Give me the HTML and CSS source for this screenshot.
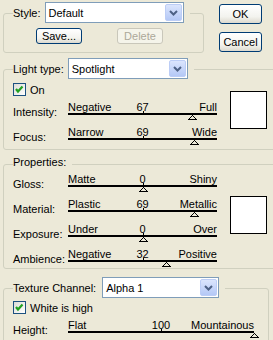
FILE: index.html
```html
<!DOCTYPE html>
<html lang="en">

<head>
    <title>Lighting Effects</title>
    <link rel="stylesheet" href="styles.css">
</head>

<body>
<div class="dialog">
    <div class="top-row">
        <fieldset class="group style-group">
            <legend>
                <div class="legend-row">
                    <span>Style:</span>
                    <div class="combo style-combo">
                        <span class="combo-text">Default</span>
                        <span class="combo-btn"><svg width="9" height="6" viewBox="0 0 9 6"><polyline points="1,1 4.5,4.5 8,1" fill="none" stroke="#4d6185" stroke-width="2"/></svg></span>
                    </div>
                </div>
            </legend>
            <div class="style-buttons">
                <button class="btn small">Save...</button>
                <button class="btn small" disabled>Delete</button>
            </div>
        </fieldset>
        <div class="dialog-buttons">
            <button class="btn">OK</button>
            <button class="btn">Cancel</button>
        </div>
    </div>

    <fieldset class="group wide-group light-group">
        <legend>
            <div class="legend-row">
                <span>Light type:</span>
                <div class="combo light-combo">
                    <span class="combo-text">Spotlight</span>
                    <span class="combo-btn"><svg width="9" height="6" viewBox="0 0 9 6"><polyline points="1,1 4.5,4.5 8,1" fill="none" stroke="#4d6185" stroke-width="2"/></svg></span>
                </div>
            </div>
        </legend>
        <div class="group-body">
            <div class="controls">
                <label class="check-row">
                    <span class="checkbox"><svg width="11" height="11" viewBox="0 0 11 11"><polyline points="2,5 4,7.5 8.5,2.5" fill="none" stroke="#21a121" stroke-width="2.2"/></svg></span>
                    On
                </label>
                <div class="slider-row">
                    <span class="slider-label">Intensity:</span>
                    <div class="slider">
                        <div class="slider-text"><span>Negative</span><span>67</span><span class="max">Full</span></div>
                        <div class="track"></div>
                        <svg class="thumb" style="left: 83.5%" width="9" height="5" viewBox="0 0 9 5"><polygon points="4.5,0.5 8.5,4.5 0.5,4.5" fill="none" stroke="#000"/></svg>
                    </div>
                </div>
                <div class="slider-row">
                    <span class="slider-label">Focus:</span>
                    <div class="slider">
                        <div class="slider-text"><span>Narrow</span><span>69</span><span class="max">Wide</span></div>
                        <div class="track"></div>
                        <svg class="thumb" style="left: 84.5%" width="9" height="5" viewBox="0 0 9 5"><polygon points="4.5,0.5 8.5,4.5 0.5,4.5" fill="none" stroke="#000"/></svg>
                    </div>
                </div>
            </div>
            <div class="swatch light-swatch"></div>
        </div>
    </fieldset>

    <fieldset class="group wide-group props-group">
        <legend><span class="legend-text">Properties:</span></legend>
        <div class="group-body">
            <div class="controls">
                <div class="slider-row">
                    <span class="slider-label">Gloss:</span>
                    <div class="slider">
                        <div class="slider-text"><span>Matte</span><span>0</span><span class="max">Shiny</span></div>
                        <div class="track"></div>
                        <svg class="thumb" style="left: 50%" width="9" height="5" viewBox="0 0 9 5"><polygon points="4.5,0.5 8.5,4.5 0.5,4.5" fill="none" stroke="#000"/></svg>
                    </div>
                </div>
                <div class="slider-row">
                    <span class="slider-label">Material:</span>
                    <div class="slider">
                        <div class="slider-text"><span>Plastic</span><span>69</span><span class="max">Metallic</span></div>
                        <div class="track"></div>
                        <svg class="thumb" style="left: 84.5%" width="9" height="5" viewBox="0 0 9 5"><polygon points="4.5,0.5 8.5,4.5 0.5,4.5" fill="none" stroke="#000"/></svg>
                    </div>
                </div>
                <div class="slider-row">
                    <span class="slider-label">Exposure:</span>
                    <div class="slider">
                        <div class="slider-text"><span>Under</span><span>0</span><span class="max">Over</span></div>
                        <div class="track"></div>
                        <svg class="thumb" style="left: 50%" width="9" height="5" viewBox="0 0 9 5"><polygon points="4.5,0.5 8.5,4.5 0.5,4.5" fill="none" stroke="#000"/></svg>
                    </div>
                </div>
                <div class="slider-row">
                    <span class="slider-label">Ambience:</span>
                    <div class="slider">
                        <div class="slider-text"><span>Negative</span><span>32</span><span class="max">Positive</span></div>
                        <div class="track"></div>
                        <svg class="thumb" style="left: 66%" width="9" height="5" viewBox="0 0 9 5"><polygon points="4.5,0.5 8.5,4.5 0.5,4.5" fill="none" stroke="#000"/></svg>
                    </div>
                </div>
            </div>
            <div class="swatch props-swatch"></div>
        </div>
    </fieldset>

    <fieldset class="group texture-group">
        <legend>
            <div class="legend-row">
                <span>Texture Channel:</span>
                <div class="combo texture-combo">
                    <span class="combo-text">Alpha 1</span>
                    <span class="combo-btn"><svg width="9" height="6" viewBox="0 0 9 6"><polyline points="1,1 4.5,4.5 8,1" fill="none" stroke="#4d6185" stroke-width="2"/></svg></span>
                </div>
            </div>
        </legend>
        <div class="controls">
            <label class="check-row">
                <span class="checkbox"><svg width="11" height="11" viewBox="0 0 11 11"><polyline points="2,5 4,7.5 8.5,2.5" fill="none" stroke="#21a121" stroke-width="2.2"/></svg></span>
                White is high
            </label>
            <div class="slider-row">
                <span class="slider-label">Height:</span>
                <div class="slider wide">
                    <div class="slider-text"><span>Flat</span><span>100</span><span class="max">Mountainous</span></div>
                    <div class="track"></div>
                    <svg class="thumb" style="left: 100%" width="9" height="5" viewBox="0 0 9 5"><polygon points="4.5,0.5 8.5,4.5 0.5,4.5" fill="none" stroke="#000"/></svg>
                </div>
            </div>
        </div>
    </fieldset>
</div>
</body>

</html>
```

FILE: styles.css
```css
body {
    margin: 0;
    background-color: #ece9d8;
    font-family: "Liberation Sans", Arial, sans-serif;
    font-size: 11px;
    color: #000;
    overflow: hidden;
}

.dialog {
    padding-left: 3px;
}

.top-row {
    display: flex;
    align-items: flex-start;
}

/* group boxes */
.group {
    box-sizing: border-box;
    margin: 0;
    padding: 0 0 0 9px;
    border: 1px solid #d0d0bf;
    border-radius: 3px;
    min-width: 0;
}

.group legend {
    padding: 0 6px 0 0;
}

.legend-row {
    display: flex;
    align-items: center;
    gap: 4px;
    height: 21px;
    padding-bottom: 2px;
}

.legend-text {
    display: block;
    line-height: 13px;
    padding-bottom: 4px;
}

.style-group {
    width: 201px;
    margin-top: 2px;
}

.wide-group {
    width: 278px;
}

.light-group {
    margin-top: 5px;
    padding-bottom: 4px;
}

.props-group {
    margin-top: 6px;
    padding-bottom: 1px;
}

.texture-group {
    width: 266px;
    margin-top: 8px;
    padding-bottom: 10px;
}

/* combo boxes */
.combo {
    box-sizing: border-box;
    display: flex;
    align-items: center;
    height: 21px;
    border: 1px solid #7f9db9;
    background-color: #fff;
}

.combo-text {
    flex: 1;
    padding-left: 3px;
}

.combo-btn {
    box-sizing: border-box;
    display: flex;
    align-items: center;
    justify-content: center;
    width: 17px;
    height: 17px;
    margin-right: 1px;
    border: 1px solid #bccdf6;
    border-radius: 2px;
    background: linear-gradient(#dbe5fd, #b4c8f6);
}

.style-combo {
    width: 139px;
}

.light-combo {
    width: 120px;
}

.texture-combo {
    width: 117px;
    margin-left: 2px;
}

/* buttons */
.btn {
    box-sizing: border-box;
    font: inherit;
    color: #000;
    padding: 0;
    border: 1px solid #003c74;
    border-radius: 3px;
    background: linear-gradient(#ffffff, #f3f3ee 65%, #dcd9ce);
}

.btn:disabled {
    border-color: #c9c7ba;
    color: #aca899;
    background: #f5f4ea;
}

.small {
    width: 46px;
    height: 16px;
}

.style-buttons {
    display: flex;
    gap: 35px;
    padding: 3px 0 8px 23px;
}

.dialog-buttons {
    display: flex;
    flex-direction: column;
    gap: 8px;
    margin-left: 15px;
    padding-top: 4px;
}

.dialog-buttons .btn {
    width: 43px;
    height: 20px;
}

/* group content */
.group-body {
    display: flex;
    align-items: flex-start;
}

.controls {
    width: 204px;
}

.light-group .controls {
    padding-top: 2px;
}

.texture-group .controls {
    width: auto;
    padding-top: 1px;
}

.check-row {
    display: flex;
    align-items: center;
    gap: 4px;
    height: 13px;
}

.checkbox {
    box-sizing: border-box;
    display: flex;
    width: 13px;
    height: 13px;
    border: 1px solid #1c5180;
    background: linear-gradient(135deg, #dcdcd7, #ffffff);
}

.swatch {
    box-sizing: border-box;
    width: 37px;
    height: 38px;
    margin-left: 13px;
    border: 1px solid #000;
    background-color: #fff;
}

.light-swatch {
    margin-top: 10px;
}

.props-swatch {
    margin-top: 23px;
}

/* sliders */
.slider-row {
    display: flex;
    margin-top: 6px;
}

.slider-row:first-child {
    margin-top: 0;
}

.check-row + .slider-row {
    margin-top: 5px;
}

.slider-label {
    width: 55px;
    line-height: 12px;
    padding-top: 5px;
}

.slider {
    position: relative;
    width: 149px;
    height: 19px;
}

.slider.wide {
    width: 186px;
}

.slider-text {
    display: grid;
    grid-template-columns: 1fr auto 1fr;
    height: 12px;
    line-height: 12px;
    white-space: nowrap;
}

.slider-text .max {
    text-align: right;
}

.track {
    position: relative;
    height: 2px;
    background-color: #000;
}

.track::after {
    content: "";
    position: absolute;
    left: 50%;
    top: -2px;
    width: 1px;
    height: 2px;
    background-color: #000;
}

.thumb {
    position: absolute;
    top: 14px;
    margin-left: -4px;
    shape-rendering: crispEdges;
}
```
